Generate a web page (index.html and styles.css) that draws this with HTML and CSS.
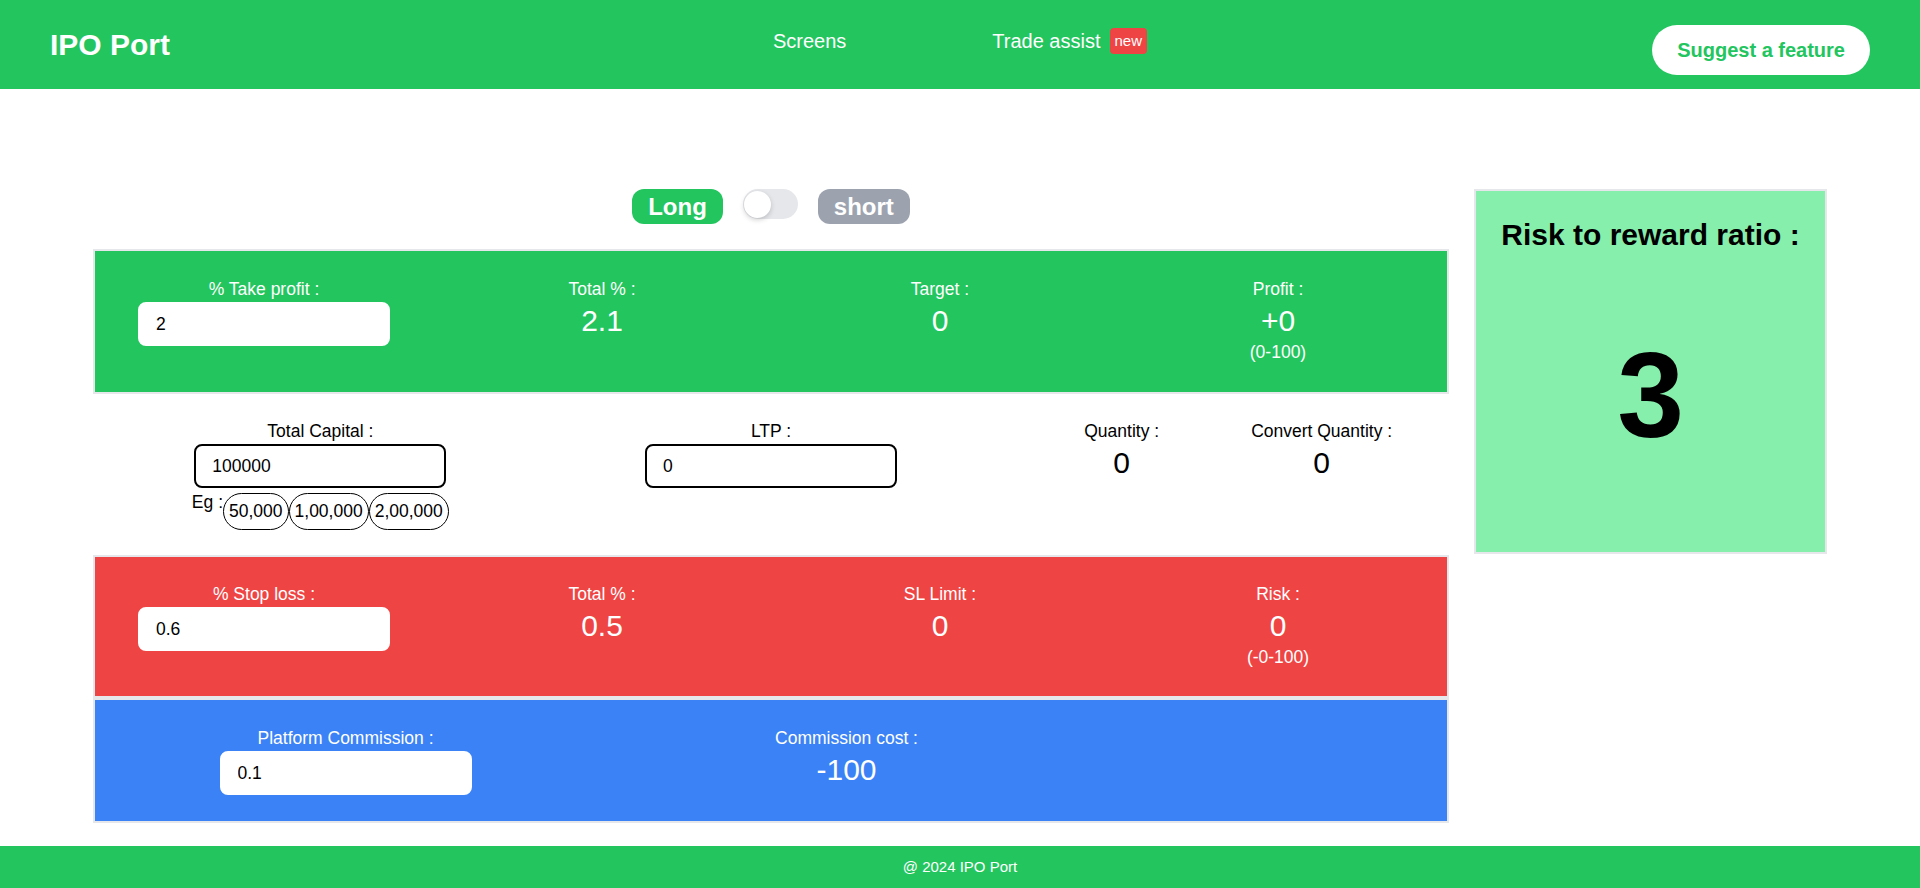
FILE: index.html
```html
<!DOCTYPE html>
<html lang="en">
<head>
<meta charset="utf-8">
<title>IPO Port</title>
<link rel="stylesheet" href="styles.css">
</head>
<body>
<header class="topbar">
  <div class="logo">IPO Port</div>
  <nav class="nav">
    <a class="nav-link">Screens</a>
    <a class="nav-link">Trade assist<span class="badge">new</span></a>
  </nav>
  <div class="actions"><button class="suggest">Suggest a feature</button></div>
</header>

<main class="main">
  <section class="left">
    <div class="mode-row">
      <span class="pill pill-long">Long</span>
      <span class="switch"><span class="knob"></span></span>
      <span class="pill pill-short">short</span>
    </div>

    <div class="panel panel-green grid4">
      <div class="col">
        <div class="label">% Take profit :</div>
        <input class="field" value="2">
      </div>
      <div class="col">
        <div class="label">Total % :</div>
        <div class="value">2.1</div>
      </div>
      <div class="col">
        <div class="label">Target :</div>
        <div class="value">0</div>
      </div>
      <div class="col">
        <div class="label">Profit :</div>
        <div class="value">+0</div>
        <div class="sub">(0-100)</div>
      </div>
    </div>

    <div class="panel panel-plain grid3">
      <div class="col">
        <div class="label">Total Capital :</div>
        <input class="field field-outline" value="100000">
        <div class="eg-row">
          <span class="eg">Eg :</span>
          <span class="chip">50,000</span>
          <span class="chip">1,00,000</span>
          <span class="chip">2,00,000</span>
        </div>
      </div>
      <div class="col">
        <div class="label">LTP :</div>
        <input class="field field-outline" value="0">
      </div>
      <div class="qty-group">
        <div class="col qty">
          <div class="label">Quantity :</div>
          <div class="value">0</div>
        </div>
        <div class="col qty">
          <div class="label">Convert Quantity :</div>
          <div class="value">0</div>
        </div>
      </div>
    </div>

    <div class="panel panel-red grid4">
      <div class="col">
        <div class="label">% Stop loss :</div>
        <input class="field" value="0.6">
      </div>
      <div class="col">
        <div class="label">Total % :</div>
        <div class="value">0.5</div>
      </div>
      <div class="col">
        <div class="label">SL Limit :</div>
        <div class="value">0</div>
      </div>
      <div class="col">
        <div class="label">Risk :</div>
        <div class="value">0</div>
        <div class="sub">(-0-100)</div>
      </div>
    </div>

    <div class="panel panel-blue grid-blue">
      <div class="col">
        <div class="label">Platform Commission :</div>
        <input class="field" value="0.1">
      </div>
      <div class="col">
        <div class="label">Commission cost :</div>
        <div class="value">-100</div>
      </div>
      <div></div>
    </div>
  </section>

  <aside class="ratio">
    <div class="ratio-title">Risk to reward ratio :</div>
    <div class="ratio-value">3</div>
  </aside>
</main>

<footer class="footer">@ 2024 IPO Port</footer>
</body>
</html>
```

FILE: styles.css
```css
* { box-sizing: border-box; }

html, body {
  margin: 0;
  padding: 0;
}

body {
  font-family: "Liberation Sans", Arial, Helvetica, sans-serif;
  color: #000;
  background: #fff;
}

/* ---------- header ---------- */
.topbar {
  height: 89px;
  background: #22c55e;
  display: grid;
  grid-template-columns: 1fr 1fr 1fr;
  align-items: center;
  padding: 0 50px;
  color: #fff;
}

.logo {
  font-size: 30px;
  font-weight: 700;
  line-height: 36px;
  justify-self: start;
}

.nav {
  justify-self: center;
  align-self: start;
  margin-top: 27px;
  display: flex;
  align-items: center;
  gap: 146px;
}

.nav-link {
  font-size: 20px;
  line-height: 28px;
  display: flex;
  align-items: center;
  color: #fff;
}

.badge {
  margin-left: 9px;
  background: #ef4444;
  color: #fff;
  font-size: 15px;
  line-height: 26px;
  height: 26px;
  padding: 0 5px;
  border-radius: 4px;
}

.actions {
  justify-self: end;
  align-self: start;
  margin-top: 25px;
}

.suggest {
  font-family: inherit;
  height: 50px;
  padding: 0 25px;
  border: none;
  border-radius: 9999px;
  background: #fff;
  color: #22c55e;
  font-size: 20px;
  font-weight: 700;
  line-height: 28px;
}

/* ---------- main ---------- */
.main {
  display: grid;
  grid-template-columns: 1356px 353px;
  column-gap: 25px;
  justify-content: center;
  align-items: start;
  padding: 100px 0 23px;
}

.left {
  display: flex;
  flex-direction: column;
}

.mode-row {
  display: flex;
  justify-content: center;
  align-items: flex-start;
  gap: 20px;
  margin-bottom: 25px;
}

.pill {
  height: 35px;
  line-height: 35px;
  padding: 0 16px;
  border-radius: 12px;
  color: #fff;
  font-size: 24px;
  font-weight: 700;
}

.pill-long { background: #22c55e; }
.pill-short { background: #9ca3af; }

.switch {
  width: 55px;
  height: 30px;
  border-radius: 15px;
  background: #e5e7eb;
  display: flex;
  align-items: center;
  padding: 0 1px;
}

.knob {
  width: 27px;
  height: 27px;
  border-radius: 50%;
  background: #fff;
  box-shadow: 0 2px 5px rgba(0, 0, 0, 0.18);
}

/* ---------- panels ---------- */
.panel {
  border: 2px solid #e5e7eb;
  align-items: start;
}

.panel-green {
  background: #22c55e;
  color: #fff;
  padding: 26px 0 27px;
}

.panel-plain {
  border-color: transparent;
  background: #fff;
  color: #000;
  padding: 23px 0 25px;
  height: 161px;
}

.panel-red {
  background: #ef4444;
  color: #fff;
  padding: 25px 0 26px;
}

.panel-blue {
  background: #3b82f6;
  color: #fff;
  padding: 26px 0 26px;
}

.grid4 {
  display: grid;
  grid-template-columns: repeat(4, 1fr);
}

.grid3 {
  display: grid;
  grid-template-columns: repeat(3, 1fr);
}

.grid-blue {
  display: grid;
  grid-template-columns: 501px 501px 1fr;
}

.col {
  display: flex;
  flex-direction: column;
  align-items: center;
}

.label {
  font-size: 17.5px;
  line-height: 25px;
  white-space: nowrap;
}

.value {
  font-size: 30px;
  line-height: 38px;
}

.sub {
  font-size: 17.5px;
  line-height: 25px;
}

.field {
  width: 252px;
  height: 44px;
  border: 2px solid #fff;
  border-radius: 8px;
  background: #fff;
  padding: 0 16px;
  font-family: inherit;
  font-size: 17.5px;
  color: #000;
  outline: none;
}

.field-outline {
  border-color: #000;
}

.eg-row {
  display: flex;
  align-items: flex-start;
  margin-top: 5px;
  white-space: nowrap;
}

.eg {
  font-size: 17.5px;
  line-height: 25px;
  margin-top: -3px;
}

.chip {
  height: 37px;
  line-height: 35px;
  padding: 0 5px;
  border: 1px solid #000;
  border-radius: 9999px;
  font-size: 17.5px;
}

.qty-group {
  display: flex;
  justify-content: center;
  gap: 40px;
}

.qty {
  width: 160px;
}

/* ---------- ratio card ---------- */
.ratio {
  height: 365px;
  border: 2px solid #e5e7eb;
  background: #86efac;
  display: flex;
  flex-direction: column;
  align-items: center;
  padding-top: 26px;
  color: #000;
}

.ratio-title {
  font-size: 30px;
  line-height: 36px;
  font-weight: 700;
}

.ratio-value {
  margin-top: 82px;
  font-size: 120px;
  line-height: 120px;
  font-weight: 700;
}

/* ---------- footer ---------- */
.footer {
  height: 42px;
  line-height: 42px;
  background: #22c55e;
  color: #fff;
  text-align: center;
  font-size: 15px;
}
```
